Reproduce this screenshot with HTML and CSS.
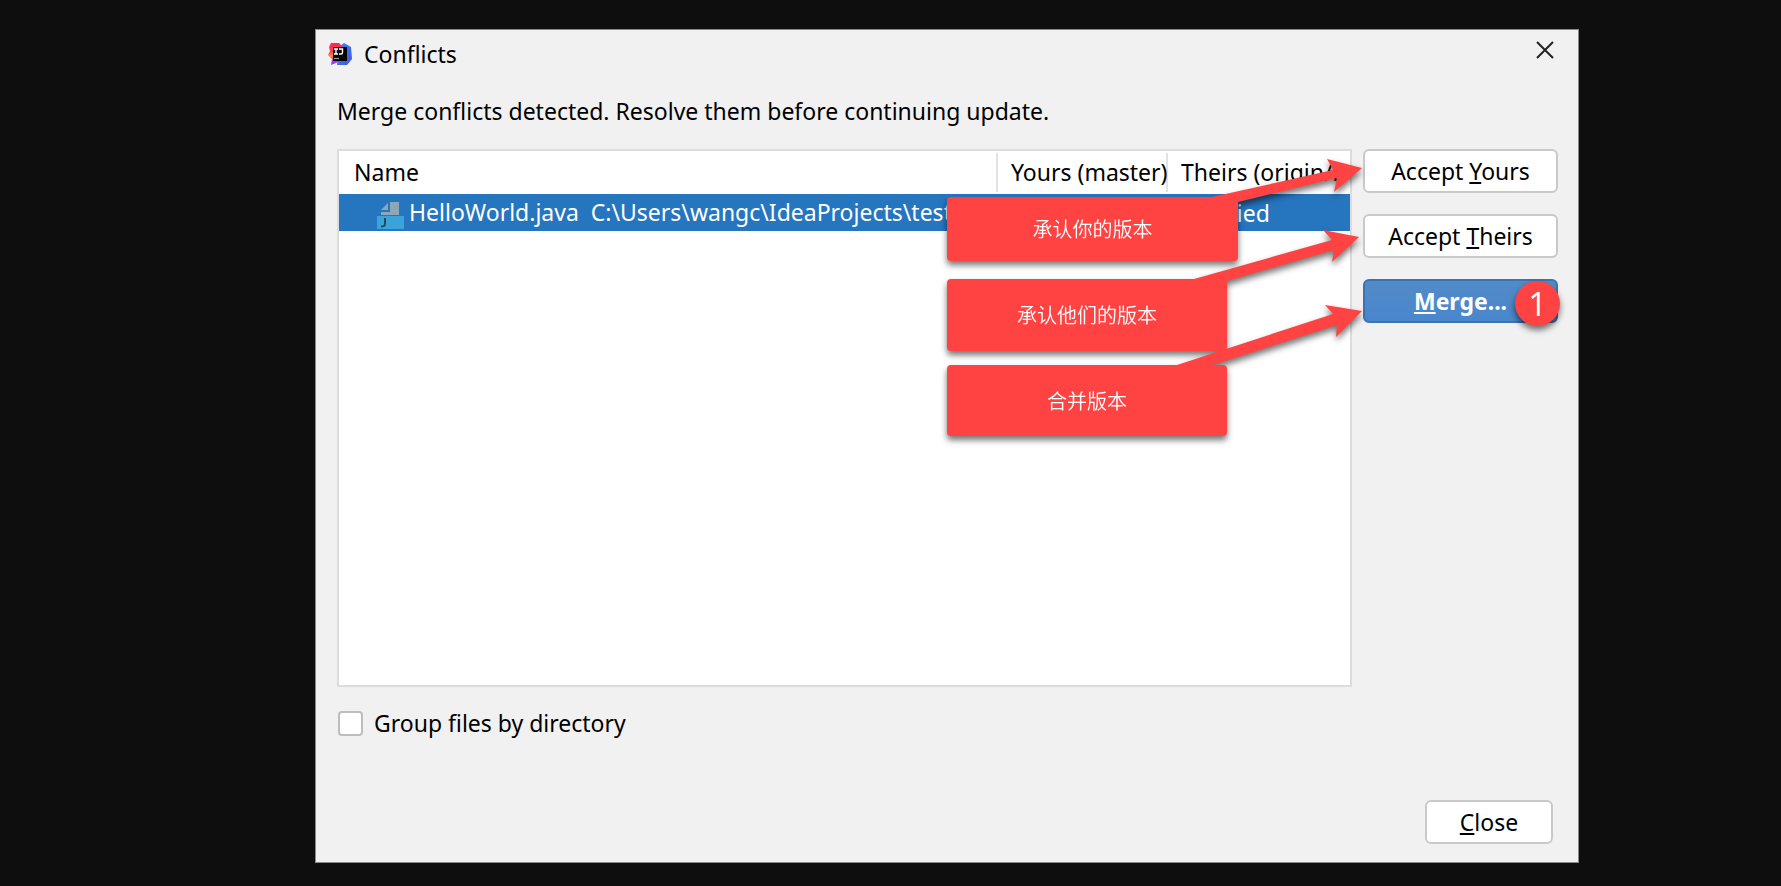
FILE: index.html
```html
<!DOCTYPE html>
<html lang="en">
<head>
<meta charset="utf-8">
<title>Conflicts</title>
<link rel="stylesheet" href="styles.css">
</head>
<body>
<main class="dialog">
  <header class="titlebar">
    <svg class="logo" viewBox="0 0 24 24" aria-hidden="true">
      <defs>
        <linearGradient id="pink" x1="0" y1="0" x2="0" y2="1"><stop offset="0" stop-color="#fe2460"/><stop offset=".4" stop-color="#fc3f55"/><stop offset=".58" stop-color="#fb8a2e"/><stop offset=".8" stop-color="#b03be0"/><stop offset="1" stop-color="#8a3be8"/></linearGradient>
        <linearGradient id="blue" x1="0" y1="0" x2="1" y2="1"><stop offset="0" stop-color="#2f8df6"/><stop offset="1" stop-color="#4a50e0"/></linearGradient>
      </defs>
      <path d="M12 4 16 1l7 4 1 12-5 6H9z" fill="url(#blue)"/>
      <path d="M3 1h8l4 4-2 14-10 4 1-6-4-4 2-4-1-4z" fill="url(#pink)"/>
      <path d="M5 5h14v14H5z" fill="#050505"/>
      <path d="M6 7h4M8 7v5M6 12h4M11 7h3.500v3.500q0 1.500-1.500 1.500h-2" fill="none" stroke="#fff" stroke-width="1.400"/>
      <path d="M6 16.500h5" stroke="#999" stroke-width="1.200"/>
    </svg>
    <h1 class="title">Conflicts</h1>
    <button class="dismiss" aria-label="Close window"><svg viewBox="0 0 18 18" aria-hidden="true"><path d="M1 1l16 16M17 1 1 17"/></svg></button>
  </header>
  <p class="message">Merge conflicts detected. Resolve them before continuing update.</p>
  <div class="content">
    <div class="files">
      <table class="table">
        <colgroup><col><col class="col-yours"><col class="col-theirs"></colgroup>
        <thead><tr><th>Name</th><th>Yours (master)</th><th class="clip">Theirs (origin/master)</th></tr></thead>
        <tbody><tr>
          <td class="file"><svg class="file-icon" viewBox="0 0 27 27" aria-hidden="true"><path d="M4 8 11 1v7z" fill="#8fa6b8"/><path d="M13 0h9v13H4v-3h9z" fill="#8fa6b8"/><path d="M0 14h27v13H0z" fill="#3aa3da"/><path d="M8 16v6q0 2.500-4 2.500" fill="none" stroke="#1f4d68" stroke-width="2"/></svg>HelloWorld.java&nbsp; C:\Users\wangc\IdeaProjects\testdemo</td>
          <td>Modified</td><td>Modified</td>
        </tr></tbody>
      </table>
    </div>
    <div class="actions">
      <button class="button"><span>Accept <u>Y</u>ours</span></button>
      <button class="button"><span>Accept <u>T</u>heirs</span></button>
      <button class="button primary"><span><u>M</u>erge...</span></button>
    </div>
  </div>
  <label class="group"><input type="checkbox" class="check">Group files by directory</label>
  <footer class="footer"><button class="button close"><span><u>C</u>lose</span></button></footer>

  <div class="annotations" lang="zh-CN">
    <div class="note note-yours">承认你的版本</div>
    <div class="note note-theirs">承认他们的版本</div>
    <div class="note note-merge">合并版本</div>
    <svg class="arrows" viewBox="0 0 260 240" aria-hidden="true">
      <path d="M92 47 213 20 207 9 242 18 214 42 217 28 118 52V60H92z"/>
      <path d="M74 129 212 90 203 80 239 87 212 112 214 100 107 131V140H74z"/>
      <path d="M57 215 213 164 205 155 242 161 216 187 217 175 93 215V222H57z"/>
    </svg>
    <span class="step">1</span>
  </div>
</main>
</body>
</html>
```

FILE: styles.css
```css
* { box-sizing: border-box; }
body {
  margin: 0;
  padding: 29px 202px 24px 315px;
  background: #0e0e0e;
  color: #000;
  font: 23px/32px "Noto Sans", "Noto Sans CJK SC", sans-serif;
}
.dialog {
  position: relative;
  padding: 0 20px 18px 21px;
  background: #f1f1f1;
  border: 1px solid #8b8b8b;
}
.titlebar { display: flex; align-items: center; height: 48px; margin-left: -9px; }
.logo { width: 24px; height: 24px; }
.title { flex: 1; margin: 0 0 0 12px; font: inherit; }
.dismiss { align-self: flex-start; margin: 11px 4px 0 0; padding: 0; border: 0; background: none; width: 18px; height: 18px; }
.dismiss svg { display: block; width: 18px; height: 18px; fill: none; stroke: #222; stroke-width: 2; }
.message { margin: 17px 0 22px; }
.content { display: flex; gap: 11px; }
.files { flex: 1; min-width: 0; height: 538px; border: 2px solid #dcdcdc; background: #fff; }
.table { width: 100%; table-layout: fixed; border-collapse: collapse; }
.col-yours { width: 170px; }
.col-theirs { width: 184px; }
.table th, .table td { padding: 0 0 0 15px; white-space: nowrap; text-align: left; font-weight: 400; }
.table td, .table .clip { overflow: hidden; }
.table th { height: 43px; padding-bottom: 1px; background: linear-gradient(#e2e2e2, #e2e2e2) left center / 2px 39px no-repeat; }
.table th:first-child { background: none; }
.table td { height: 37px; padding-left: 8px; background: #2675bf; color: #fff; }
.table .file { padding-left: 38px; }
.file-icon { width: 27px; height: 27px; margin-right: 5px; vertical-align: middle; }
.actions { display: flex; flex-direction: column; gap: 21px; width: 195px; }
.button {
  height: 44px; padding: 0; background: #fff; color: #000;
  border: 2px solid #c9c9c9; border-radius: 6px; font: inherit;
}
.button u { text-decoration-thickness: 2px; text-underline-offset: 2px; }
.primary { background: linear-gradient(#528bc8, #4986cc); border-color: #3a74b4; color: #fff; font-weight: 700; }
.group { display: flex; align-items: center; gap: 11px; margin-top: 20px; }
.check { appearance: none; width: 25px; height: 25px; margin: 0 0 0 1px; background: #fff; border: 2px solid #bdbdbd; border-radius: 4px; }
.footer { display: flex; justify-content: flex-end; margin-top: 61px; padding-right: 5px; }
.close { width: 128px; }

/* Callouts share one shadow so each arrow merges with its box. */
.annotations {
  position: absolute; inset: 0; pointer-events: none;
  color: #fff; font-size: 20px; font-weight: 350; font-family: "Noto Sans CJK SC", sans-serif;
  filter: drop-shadow(0 4px 3px rgb(0 0 0 / 55%));
}
.note {
  position: absolute; left: 631px; width: 280px; height: 72px;
  display: flex; align-items: center; justify-content: center;
  background: #ff4343; border-radius: 4px;
}
.note-yours { top: 167px; width: 291px; height: 64px; }
.note-theirs { top: 249px; }
.note-merge { top: 335px; height: 71px; }
.arrows { position: absolute; top: 120px; left: 804px; width: 260px; height: 240px; fill: #ff4343; }
.step {
  position: absolute; top: 251px; left: 1199px; width: 45px; height: 45px;
  border-radius: 50%; background: #ff4343;
  font: 32px/45px "Noto Sans", sans-serif; text-align: center;
}
```
